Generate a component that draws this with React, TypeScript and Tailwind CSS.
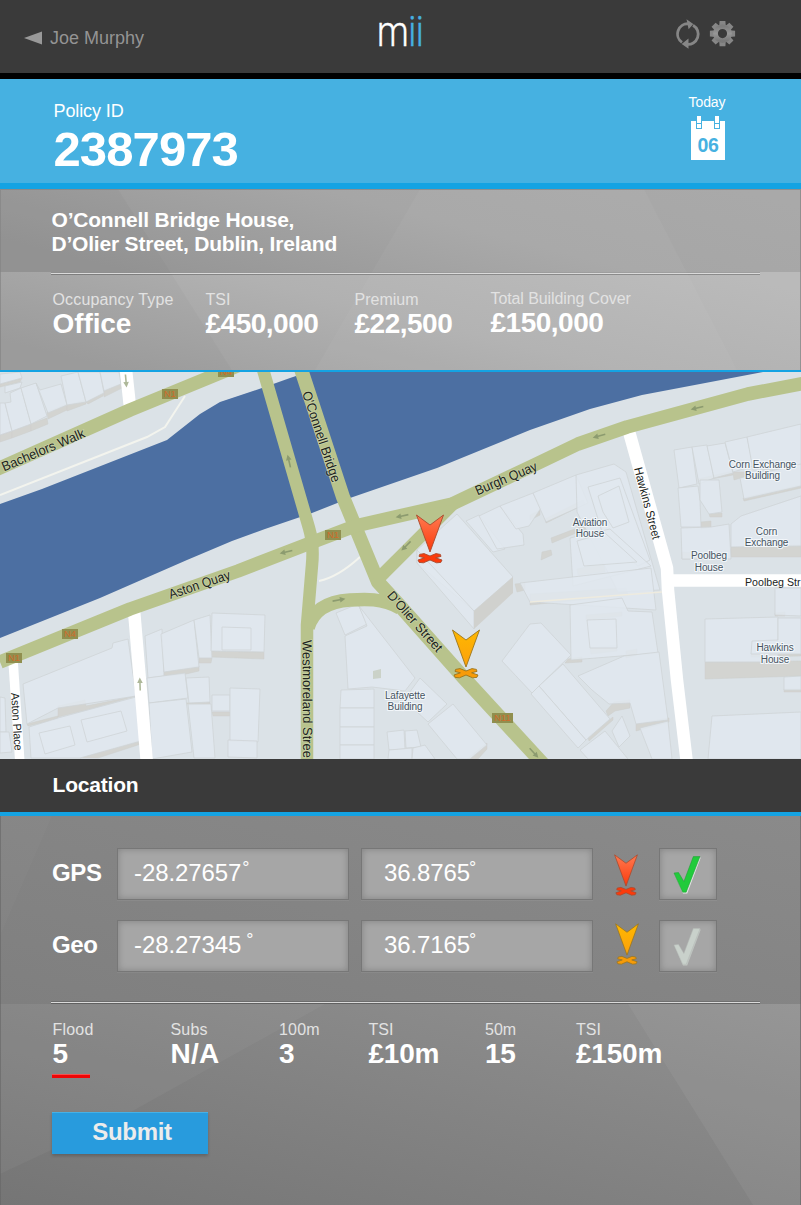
import React from "react";

const ROAD = "#b8c38c";

const lotShapes: string[] = [
  "0,374 20,372 22,378 0,384",
  "5,386 22,382 20,388 5,393",
  "0,403 5,403 12,431 0,435",
  "5,403 11,402 10,393 21,388 31,424 12,431",
  "21,388 36,383 47,416 31,424",
  "36,383 40,390 61,384 67,405 48,413",
  "61,376 78,372 86,402 67,405",
  "78,372 100,372 104,393 86,402",
  "100,372 119,372 121,384 104,391",
  "145,636 162,629 164,676 148,678",
  "161,634 194,620 199,667 164,672",
  "194,620 210,615 212,658 199,658",
  "212,613 265,615 264,652 211,651",
  "222,627 251,628 251,650 222,650",
  "147,678 185,673 188,698 149,703",
  "186,678 209,677 210,702 189,703",
  "149,703 186,699 192,752 152,759",
  "188,704 211,704 215,758 194,758",
  "212,695 230,695 230,711 212,711",
  "230,688 260,689 258,742 230,741",
  "228,740 257,741 257,758 228,757",
  "23,684 112,648 113,643 128,639 136,696 85,704 58,708 27,724",
  "29,727 58,718 136,697 141,741 80,758 31,758",
  "39,733 70,726 75,745 45,754",
  "81,720 121,711 127,731 87,742",
  "0,697 5,698 6,732 0,732",
  "0,732 9,732 12,752 0,753",
  "336,613 358,604 367,624 345,635",
  "345,636 367,626 359,606 415,678 405,691 372,687 348,689",
  "341,690 374,689 374,708 340,708",
  "340,708 374,708 374,727 340,727",
  "340,727 374,727 374,745 340,745",
  "340,745 374,745 374,759 340,759",
  "387,732 404,730 405,749 389,750",
  "405,731 417,730 421,747 406,748",
  "389,750 412,748 412,759 388,759",
  "413,748 425,745 435,759 412,759",
  "420,678 447,704 428,722 404,700",
  "428,724 453,704 487,745 470,759 457,759",
  "417,550 457,514 513,577 474,611 417,563",
  "466,521 479,515 505,549 493,552",
  "479,516 500,506 523,534 524,545 497,549",
  "500,506 533,493 541,508 529,526 516,529",
  "533,493 576,475 588,503 546,522",
  "576,475 614,464 626,472 660,590 618,592 577,512",
  "588,487 620,478 650,560 638,566 604,538",
  "598,496 619,486 629,522 613,528 603,512",
  "570,538 610,529 651,566 573,586",
  "577,541 605,533 637,562 584,566",
  "520,583 651,568 656,610 530,602",
  "570,605 622,598 628,611 652,612 658,653 571,660",
  "587,620 616,619 617,648 590,648",
  "530,624 541,623 571,655 532,693 502,661",
  "539,686 563,664 610,719 586,740",
  "531,694 539,686 586,740 578,748",
  "578,676 624,656 659,652 668,720 636,724 630,703 609,704 592,690",
  "612,731 622,716 630,736 619,747",
  "580,750 605,731 628,759 588,759",
  "640,728 668,721 672,759 652,759",
  "674,450 692,447 697,484 679,488",
  "692,447 707,445 714,478 699,484",
  "707,446 725,443 733,473 714,478",
  "725,442 747,437 753,466 733,472",
  "747,437 801,424 801,468 753,470",
  "678,488 698,486 700,500 701,527 681,527",
  "700,480 719,480 722,512 709,514 700,500",
  "681,528 711,527 729,524 731,559 682,559",
  "740,478 801,464 801,486 744,499",
  "741,516 801,496 801,546 731,547 731,524",
  "705,619 778,617 778,662 705,662",
  "775,588 801,588 801,616 775,615",
  "778,618 801,618 801,654 751,654 752,641 778,640",
  "784,677 801,676 801,690 784,690",
  "712,716 801,712 801,759 708,759",
];

const shadeShapes: string[] = [
  "0,435 12,431 12,438 0,442",
  "12,431 31,424 31,431 12,438",
  "31,424 47,418 48,424 31,431",
  "47,412 67,404 67,410 48,419",
  "67,405 86,400 86,404 67,411",
  "86,402 104,392 103,396 88,404",
  "104,390 120,384 122,388 104,397",
  "0,384 22,378 20,382 0,387",
  "58,706 85,700 86,706 136,696 86,710 58,717",
  "27,724 58,716 58,719 28,726",
  "80,758 141,740 141,744 98,758",
  "164,672 199,666 199,671 186,674 164,676",
  "199,658 212,658 211,663 199,663",
  "211,651 264,652 264,659 211,657",
  "186,703 210,702 210,704 189,705",
  "212,712 230,712 230,716 213,716",
  "545,519 583,500 585,504 546,523",
  "551,538 585,525 588,528 552,543",
  "530,515 540,510 540,515 530,520",
  "542,552 551,550 552,555 541,560",
  "530,594 626,588 628,595 530,605",
  "586,615 622,612 622,616 586,620",
  "590,648 617,645 617,651 591,654",
  "568,659 582,657 582,662 565,663",
  "626,651 637,649 637,655 626,658",
  "636,724 669,718 669,722 636,731",
  "614,702 630,700 630,708 615,711 608,716 606,711",
  "588,737 613,717 613,720 589,741",
  "467,759 487,743 487,749 478,759",
  "698,479 733,471 733,475 700,481",
  "733,472 746,472 744,477 734,480",
  "743,498 801,485 801,488 744,501",
  "731,547 801,545 801,557 731,557",
  "701,522 711,521 711,527 701,529",
  "709,514 722,513 722,517 710,517",
  "682,552 709,554 709,559 682,559",
  "705,662 801,661 801,676 705,679",
  "775,613 785,612 785,616 775,616",
  "784,689 801,689 801,692 784,692",
  "751,653 801,654 801,656 751,657",
  "577,569 604,563 605,572 578,575",
  "515,584 525,583 525,590 517,592",
];

function Marker({ tone }: { tone: "red" | "amber" }) {
  const red = tone === "red";
  const cross = red ? "#fb3a0b" : "#f79b08";
  const edge = red ? "#a9492c" : "#9b751c";
  return (
    <g>
      <path
        d="M3.6 40.4 L8 39.6 L14 42 L20 39.6 L24.4 40.4 L25 42.4 L19.6 43.8 L26 46 L24.8 48.4 L20.6 48.8 L14 46 L7.4 48.8 L3.2 48.4 L2 46 L8.4 43.8 L3 42.4 Z"
        fill={cross} stroke={edge} strokeWidth="0.9" strokeLinejoin="round"
      />
      <path
        d="M0.5 1 L14 11 L27.5 1 L14 38 Z"
        fill={red ? "url(#pinRed)" : "url(#pinAmber)"} stroke={edge} strokeWidth="0.9"
      />
    </g>
  );
}

function Arrow({ x, y, a }: { x: number; y: number; a: number }) {
  return (
    <path
      transform={`translate(${x} ${y}) rotate(${a})`}
      d="M-6.5 0 L-1 -2.8 V-0.8 H6.5 V0.8 H-1 V2.8 Z"
      fill="#8c9b6f"
    />
  );
}

function Shield({ x, y, w, t }: { x: number; y: number; w: number; t: string }) {
  return (
    <g>
      <rect x={x} y={y} width={w} height="10" fill="#908f4f" />
      <text x={x + w / 2} y={y + 8.3} textAnchor="middle" fontSize="9.5" fill="#cf6c2b">{t}</text>
    </g>
  );
}

function RoadName({ x, y, a, len, size, children }: { x: number; y: number; a: number; len: number; size: number; children: string }) {
  return (
    <text
      transform={`translate(${x} ${y}) rotate(${a})`} fontSize={size} textLength={len}
      lengthAdjust="spacingAndGlyphs" fill="#20241c"
      stroke="#ffffff" strokeOpacity="0.25" strokeWidth="1.5" paintOrder="stroke"
    >
      {children}
    </text>
  );
}

function Place({ x, y, a, b }: { x: number; y: number; a: string; b: string }) {
  return (
    <text textAnchor="middle" fontSize="10" letterSpacing="-0.1" fill="#47545f" stroke="#f2f6fa" strokeWidth="2.2" paintOrder="stroke">
      <tspan x={x} y={y}>{a}</tspan>
      <tspan x={x} y={y + 11.2}>{b}</tspan>
    </text>
  );
}

function CityMap() {
  return (
    <svg
      viewBox="0 372 801 387"
      className="block h-[387px] w-full font-['Liberation_Sans',Arial,sans-serif]"
    >
      <defs>
        <linearGradient id="pinRed" x1="0" y1="0" x2="0" y2="1">
          <stop offset="0" stopColor="#ff7a50" />
          <stop offset="1" stopColor="#fb3a0c" />
        </linearGradient>
        <linearGradient id="pinAmber" x1="0" y1="0" x2="0" y2="1">
          <stop offset="0" stopColor="#ffb800" />
          <stop offset="1" stopColor="#fba00c" />
        </linearGradient>
      </defs>
      <rect y="372" width="801" height="387" fill="#dbe2e7" />
      <g fill="#d3d4d1" stroke="#cccecd" strokeWidth="0.5">
        {shadeShapes.map((p) => <polygon key={p} points={p} />)}
      </g>
      <g fill="#e1e8ef" fillOpacity="0.85" stroke="#cfd4d7" strokeWidth="0.8">
        {lotShapes.map((p) => <polygon key={p} points={p} />)}
        <polygon points="417,550 417,563 474,629 474,611" />
      </g>
      <polygon points="474,611 513,577 513,593 474,629" fill="#d0d1ce" />
      <polygon points="373,671 381,669 381,678 373,679" fill="#cbd2c8" />
      <g fill="none" stroke="#f3f4ee" strokeWidth="2">
        <path d="M0 495 L147 437 L165 427 L185 396" />
        <path d="M319 581 Q338 577 360 557" />
        <path d="M530 602 L662 592" strokeWidth="1.5" stroke="#eeebdf" />
      </g>
      <path
        d="M0 504 L42 489 L167 440 L200 414 L220 402 L262 388 L290 378 L308 372 H763 L700 384 L642 395 L590 409 L530 430 L437 468 L350 498 L312 513 L265 529 L232 541 L187 560 L100 598 L0 638 Z"
        fill="#4c6fa2"
      />
      <g fill="none" stroke="#ffffff" strokeWidth="12.5" strokeLinejoin="round">
        <path d="M628 428 L667 568 L668 590 L677 680 L687 764" />
        <path d="M670 580.5 H805" />
        <path d="M134 610 L147 764" />
        <path d="M13 660 L20 764" strokeWidth="9.5" />
        <path d="M126 370 L130 407" />
      </g>
      <g fill="none" stroke={ROAD} strokeWidth="13.5" strokeLinejoin="round">
        <path d="M-5 470 L130 410 L242 364" />
        <path d="M262 366 L309 528 Q314 545 312 565 L307 625 L307 764" strokeWidth="12.5" />
        <path d="M300 366 L343 497 L378 582 L400 606 L463 677 L544 765" strokeWidth="14" />
        <path d="M805 383 L748 394 L627 427 L578 444 L530 467 L452 504 L355 526 L313 542 L238 571 L130 609 L0 662" />
        <path d="M455 502 L376 581" strokeWidth="12.5" />
        <path d="M308 628 C314 606 335 601 350 600 S382 598 400 608" />
      </g>
      <polygon points="420,515 435,508 451,505 425,531" fill={ROAD} />
      <Arrow x={289} y={461} a={77} />
      <Arrow x={402} y={516} a={-12} />
      <Arrow x={406} y={546} a={-45} />
      <Arrow x={286} y={552} a={-14} />
      <Arrow x={339} y={600} a={170} />
      <Arrow x={599} y={436} a={-15} />
      <Arrow x={697} y={408} a={-14} />
      <Arrow x={534} y={753} a={228} />
      <g opacity="0.7">
        <Arrow x={126} y={381} a={-95} />
        <Arrow x={140} y={684} a={88} />
      </g>
      <Shield x={162} y={389} w={16} t="N1" />
      <Shield x={218} y={367} w={16} t="N4" />
      <Shield x={325} y={530} w={16} t="N1" />
      <Shield x={62} y={629} w={16} t="N4" />
      <Shield x={6} y={653} w={16} t="N1" />
      <Shield x={492} y={713} w={21} t="N11" />
      <RoadName x={4} y={471.5} a={-23} len={89} size={13.5}>Bachelors Walk</RoadName>
      <RoadName x={170.5} y={599} a={-18.5} len={64} size={13.5}>Aston Quay</RoadName>
      <RoadName x={477.5} y={495.5} a={-23} len={66} size={13.5}>Burgh Quay</RoadName>
      <RoadName x={302} y={393} a={71.5} len={95} size={13.3}>O'Connell Bridge</RoadName>
      <RoadName x={386.5} y={596} a={48.5} len={76} size={13.3}>D'Olier Street</RoadName>
      <RoadName x={302.5} y={640} a={89.7} len={118} size={13.3}>Westmoreland Stree</RoadName>
      <RoadName x={634} y={468.5} a={75.2} len={74} size={12}>Hawkins Street</RoadName>
      <RoadName x={11} y={693} a={86.5} len={58} size={11.5}>Aston Place</RoadName>
      <text x="745" y="585.5" fontSize="11.5" textLength="55.5" lengthAdjust="spacingAndGlyphs" fill="#20241c">Poolbeg Str</text>
      <Place x={762.5} y={467.5} a="Corn Exchange" b="Building" />
      <Place x={590} y={525.5} a="Aviation" b="House" />
      <Place x={766.5} y={534.5} a="Corn" b="Exchange" />
      <Place x={709} y={559.3} a="Poolbeg" b="House" />
      <Place x={775} y={651.3} a="Hawkins" b="House" />
      <Place x={405} y={698.5} a="Lafayette" b="Building" />
      <g transform="translate(416 514)"><Marker tone="red" /></g>
      <g transform="translate(452 629)"><Marker tone="amber" /></g>
    </svg>
  );
}

interface StatProps {
  label: string;
  value: string;
  width: string;
  lift?: boolean;
  labelTracking?: string;
  tracking?: string;
}

function Stat({ label, value, width, lift, labelTracking = "tracking-normal", tracking = "tracking-[-0.5px]" }: StatProps) {
  return (
    <div className={`${width} shrink-0 whitespace-nowrap ${lift ? "-mt-px" : ""}`}>
      <div className={`text-[16px] leading-5 text-[#e2e2e2] ${labelTracking}`}>{label}</div>
      <div className={`text-[28px] font-bold leading-7 text-white ${tracking}`}>{value}</div>
    </div>
  );
}

const fieldBox =
  "h-[52px] border border-[#777] bg-[#a6a6a6] shadow-[inset_0_0_7px_rgba(0,0,0,0.22),0_1px_0_rgba(255,255,255,0.06)]";

function Field({ value, gap, pad }: { value: string; gap: string; pad: string }) {
  return (
    <div className={`${fieldBox} flex w-[232px] items-start ${pad} pt-[9px] text-[24px] leading-[29px] tracking-[-0.1px] text-white`}>
      <span>{value}</span>
      <span className={`${gap} text-[18px] leading-[20px]`}>°</span>
    </div>
  );
}

function Row({ name, lat, lon, latGap, tone }: { name: string; lat: string; lon: string; latGap: string; tone: "red" | "amber" }) {
  const on = tone === "red";
  return (
    <div className="flex h-[52px]">
      <div className="w-[65px] pt-[10px] text-[24px] font-bold leading-[29px] tracking-[-0.4px] text-white">{name}</div>
      <Field value={lat} gap={latGap} pad="pl-4" />
      <div className="w-3" />
      <Field value={lon} gap="-ml-px" pad="pl-[22px]" />
      <div className="flex w-[66px] justify-center">
        <svg viewBox="-1 0 30 51" className={`h-[43px] w-[26px] ${on ? "mt-[6px]" : "ml-[2px] mt-[3px]"}`}>
          <Marker tone={tone} />
        </svg>
      </div>
      <div className={`${fieldBox} w-[58px]`}>
        <svg viewBox="1 1 56 50" className="block h-[50px] w-14">
          <path d="M15.8 26.3 L20 26 L25 35 L34.8 9.4 H41.8 L28.2 45.4 H24 Z" fill={on ? "#e8e8e8" : "#bfc4c0"} />
          <path
            d="M15 25 L19.5 24.5 L24.9 33.5 L34.3 8.6 H41 L27.2 44.2 H23.7 Z"
            fill={on ? "#21cb3b" : "#c9d1cb"}
            stroke={on ? "#1a9a30" : "#b4bab6"}
            strokeWidth="0.5"
          />
        </svg>
      </div>
    </div>
  );
}

function Rule() {
  return (
    <div className="py-px">
      <div className="ml-[51px] h-px w-[709px] bg-[#dadada] shadow-[0_-1px_0_rgba(0,0,0,0.15),0_1px_0_rgba(0,0,0,0.25)]" />
    </div>
  );
}

export default function App() {
  return (
    <div className="flex h-[1205px] w-[801px] flex-col overflow-hidden bg-[#848484] font-['Liberation_Sans',Arial,sans-serif]">
      <header className="flex h-[79px] items-start border-b-[6px] border-black bg-[#3a3a3a] pl-6">
        <div className="flex w-[353px] items-center pt-[26px] text-[18px] leading-6 text-[#949494]">
          <svg viewBox="0 0 18 14" className="mr-2 h-[14px] w-[18px]">
            <path d="M0 7 L18 0.5 V13.5 Z" fill="#999" />
          </svg>
          Joe Murphy
        </div>
        <div className="mt-[8px] w-[299px]">
          <div className="w-max origin-left scale-x-[0.84] font-[Roboto,sans-serif] text-[42.5px] font-light leading-[48px] tracking-[-0.5px] text-white [-webkit-text-stroke:0.4px_currentColor]">
            m<span className="text-[#46b1e1]">ii</span>
          </div>
        </div>
        <svg viewBox="0 0 62 30" className="mt-[19px] h-[30px] w-[62px]">
          <defs>
            <linearGradient id="metal" x1="0" y1="0" x2="0" y2="1">
              <stop offset="0" stopColor="#7d7d7d" />
              <stop offset="0.5" stopColor="#969696" />
              <stop offset="1" stopColor="#797979" />
            </linearGradient>
          </defs>
          <g fill="none" stroke="#868686" strokeWidth="2.8">
            <path d="M6 23.4 A10 10.2 0 0 1 12.5 4.8" />
            <path d="M17 6.2 A10 10.2 0 0 1 10.5 25.2" />
          </g>
          <path d="M10.5 0.3 L17.3 5 L12.6 10.2 Z M12.5 19.6 L5.7 25 L12.5 29.7 Z" fill="#868686" />
          <g transform="translate(46.5 14.6)">
            {[0, 45, 90, 135].map((a) => (
              <g key={a} transform={`rotate(${a})`}>
                <path d="M-2.9 -12.6 H2.9 L3.3 -7 H-3.3 Z M-2.9 12.6 H2.9 L3.3 7 H-3.3 Z" fill="#868686" />
              </g>
            ))}
            <circle r="7" fill="none" stroke="url(#metal)" strokeWidth="4.8" />
          </g>
        </svg>
      </header>

      <section className="flex h-[110px] justify-between border-b-[6px] border-[#14a3e3] bg-[#46b1e1] text-white">
        <div className="pl-[53.5px] pt-5">
          <div className="text-[18px] leading-6 tracking-[-0.1px]">Policy ID</div>
          <div className="mt-[2px] text-[49px] font-bold leading-[48px] tracking-[-0.9px]">2387973</div>
        </div>
        <div className="mr-[73px] flex w-[40px] flex-col items-center pt-[14px]">
          <div className="-ml-[2px] text-[14px] leading-[18px] tracking-[-0.1px]">Today</div>
          <svg viewBox="0 0 34 44" className="mt-[5px] h-11 w-[34px]">
            <path d="M0 5 H34 V44 H0 Z" fill="#fff" />
            {[5, 23].map((x) => (
              <g key={x}>
                <rect x={x} y="5" width="6" height="8" fill="#46b1e1" />
                <rect x={x + 1} y="0" width="4" height="12" fill="#fff" />
                <path d={`M${x + 1} 7.5 H${x + 5}`} stroke="#46b1e1" />
              </g>
            ))}
            <text x="17" y="36.2" textAnchor="middle" fontSize="19.5" letterSpacing="-0.3" fontWeight="bold" fill="#46b1e1">06</text>
          </svg>
        </div>
      </section>

      <section className="relative h-[183px] border-b-2 border-[#14a3e3] bg-[#a3a3a3]">
        <svg viewBox="0 0 801 181" className="absolute inset-0 h-[181px] w-full">
          <defs>
            <linearGradient id="facetTop" x1="0" y1="0.6" x2="1" y2="0.2">
              <stop offset="0" stopColor="#959595" />
              <stop offset="0.55" stopColor="#a6a6a6" />
              <stop offset="1" stopColor="#a9a9a9" />
            </linearGradient>
            <linearGradient id="facetLow" x1="0" y1="0.7" x2="1" y2="0.2">
              <stop offset="0" stopColor="#9f9f9f" />
              <stop offset="0.5" stopColor="#b1b1b1" />
              <stop offset="1" stopColor="#bababa" />
            </linearGradient>
          </defs>
          <rect width="801" height="83" fill="url(#facetTop)" />
          <rect y="83" width="801" height="98" fill="url(#facetLow)" />
          <path d="M0 0 H118 L232 181 H0 Z" fill="#000" opacity="0.02" />
          <path d="M420 0 H644 L737 181 H315 Z" fill="#fff" opacity="0.035" />
          <path d="M0.5 0 V181 M800.5 0 V181 M0 0.5 H801" stroke="#858585" opacity="0.7" />
        </svg>
        <div className="relative">
          <div className="h-[83px] pl-[51.5px] pt-[19px] text-[21px] font-bold leading-6 tracking-[-0.2px] text-white">
            <div>O’Connell Bridge House,</div>
            <div>D’Olier Street, Dublin, Ireland</div>
          </div>
          <Rule />
          <div className="flex pl-[52.5px] pt-[15px]">
            <Stat label="Occupancy Type" value="Office" width="w-[153px]" labelTracking="tracking-[0.15px]" tracking="tracking-[-0.1px]" />
            <Stat label="TSI" value="£450,000" width="w-[149px]" />
            <Stat label="Premium" value="£22,500" width="w-[136px]" />
            <Stat label="Total Building Cover" value="£150,000" width="w-[170px]" labelTracking="tracking-[-0.1px]" lift />
          </div>
        </div>
      </section>

      <CityMap />

      <div className="h-[57px] border-b-4 border-[#14a3e3] bg-[#3a3a3a] pl-[52.5px] pt-[14px] text-[21px] font-bold leading-6 tracking-[-0.2px] text-white">
        Location
      </div>

      <section className="relative h-[389px]">
        <svg viewBox="0 0 801 389" className="absolute inset-0 h-[389px] w-full">
          <defs>
            <linearGradient id="slateTop" x1="0" y1="1" x2="1" y2="0">
              <stop offset="0" stopColor="#7f7f7f" />
              <stop offset="1" stopColor="#8a8a8a" />
            </linearGradient>
            <linearGradient id="slateLow" x1="0" y1="1" x2="1" y2="0">
              <stop offset="0" stopColor="#757575" />
              <stop offset="1" stopColor="#919191" />
            </linearGradient>
          </defs>
          <rect width="801" height="188" fill="url(#slateTop)" />
          <rect y="188" width="801" height="201" fill="url(#slateLow)" />
          <path d="M0 188 H325 L120 302 L0 358 Z" fill="#fff" opacity="0.04" />
          <path d="M628 188 H801 V389 H753 Z" fill="#fff" opacity="0.05" />
          <path d="M0 0 H52 L0 120 Z" fill="#fff" opacity="0.02" />
          <path d="M0.5 0 V389 M800.5 0 V389" stroke="#666" opacity="0.6" />
        </svg>
        <div className="relative">
          <div className="flex flex-col gap-5 pl-[52px] pt-8">
            <Row name="GPS" lat="-28.27657" lon="36.8765" latGap="ml-[1px]" tone="red" />
            <Row name="Geo" lat="-28.27345" lon="36.7165" latGap="ml-[5px]" tone="amber" />
          </div>
          <div className="h-[29px]" />
          <Rule />
          <div className="flex pl-[52.5px] pt-4">
            <Stat label="Flood" value="5" width="w-[118px]" labelTracking="tracking-[0.2px]" />
            <Stat label="Subs" value="N/A" width="w-[108.5px]" labelTracking="tracking-[0.2px]" tracking="tracking-[0.3px]" />
            <Stat label="100m" value="3" width="w-[89.5px]" labelTracking="tracking-[0.2px]" />
            <Stat label="TSI" value="£10m" width="w-[116.5px]" tracking="tracking-[-0.2px]" />
            <Stat label="50m" value="15" width="w-[91px]" tracking="tracking-[-0.2px]" />
            <Stat label="TSI" value="£150m" width="w-[120px]" tracking="tracking-[-0.2px]" />
          </div>
          <div className="ml-[52px] mt-[6px] h-1 w-[38px] border-t border-[#f4504e] bg-[#ee0607]" />
          <button className="ml-[52px] mt-[34px] block h-[42px] w-[156px] border-t border-[#46b1e6] bg-[#289bdd] pb-[4px] pl-1 text-[24px] font-bold leading-7 tracking-[-0.3px] text-[#ececec] shadow-[0_2px_3px_rgba(0,0,0,0.2)]">
            Submit
          </button>
        </div>
      </section>
    </div>
  );
}
